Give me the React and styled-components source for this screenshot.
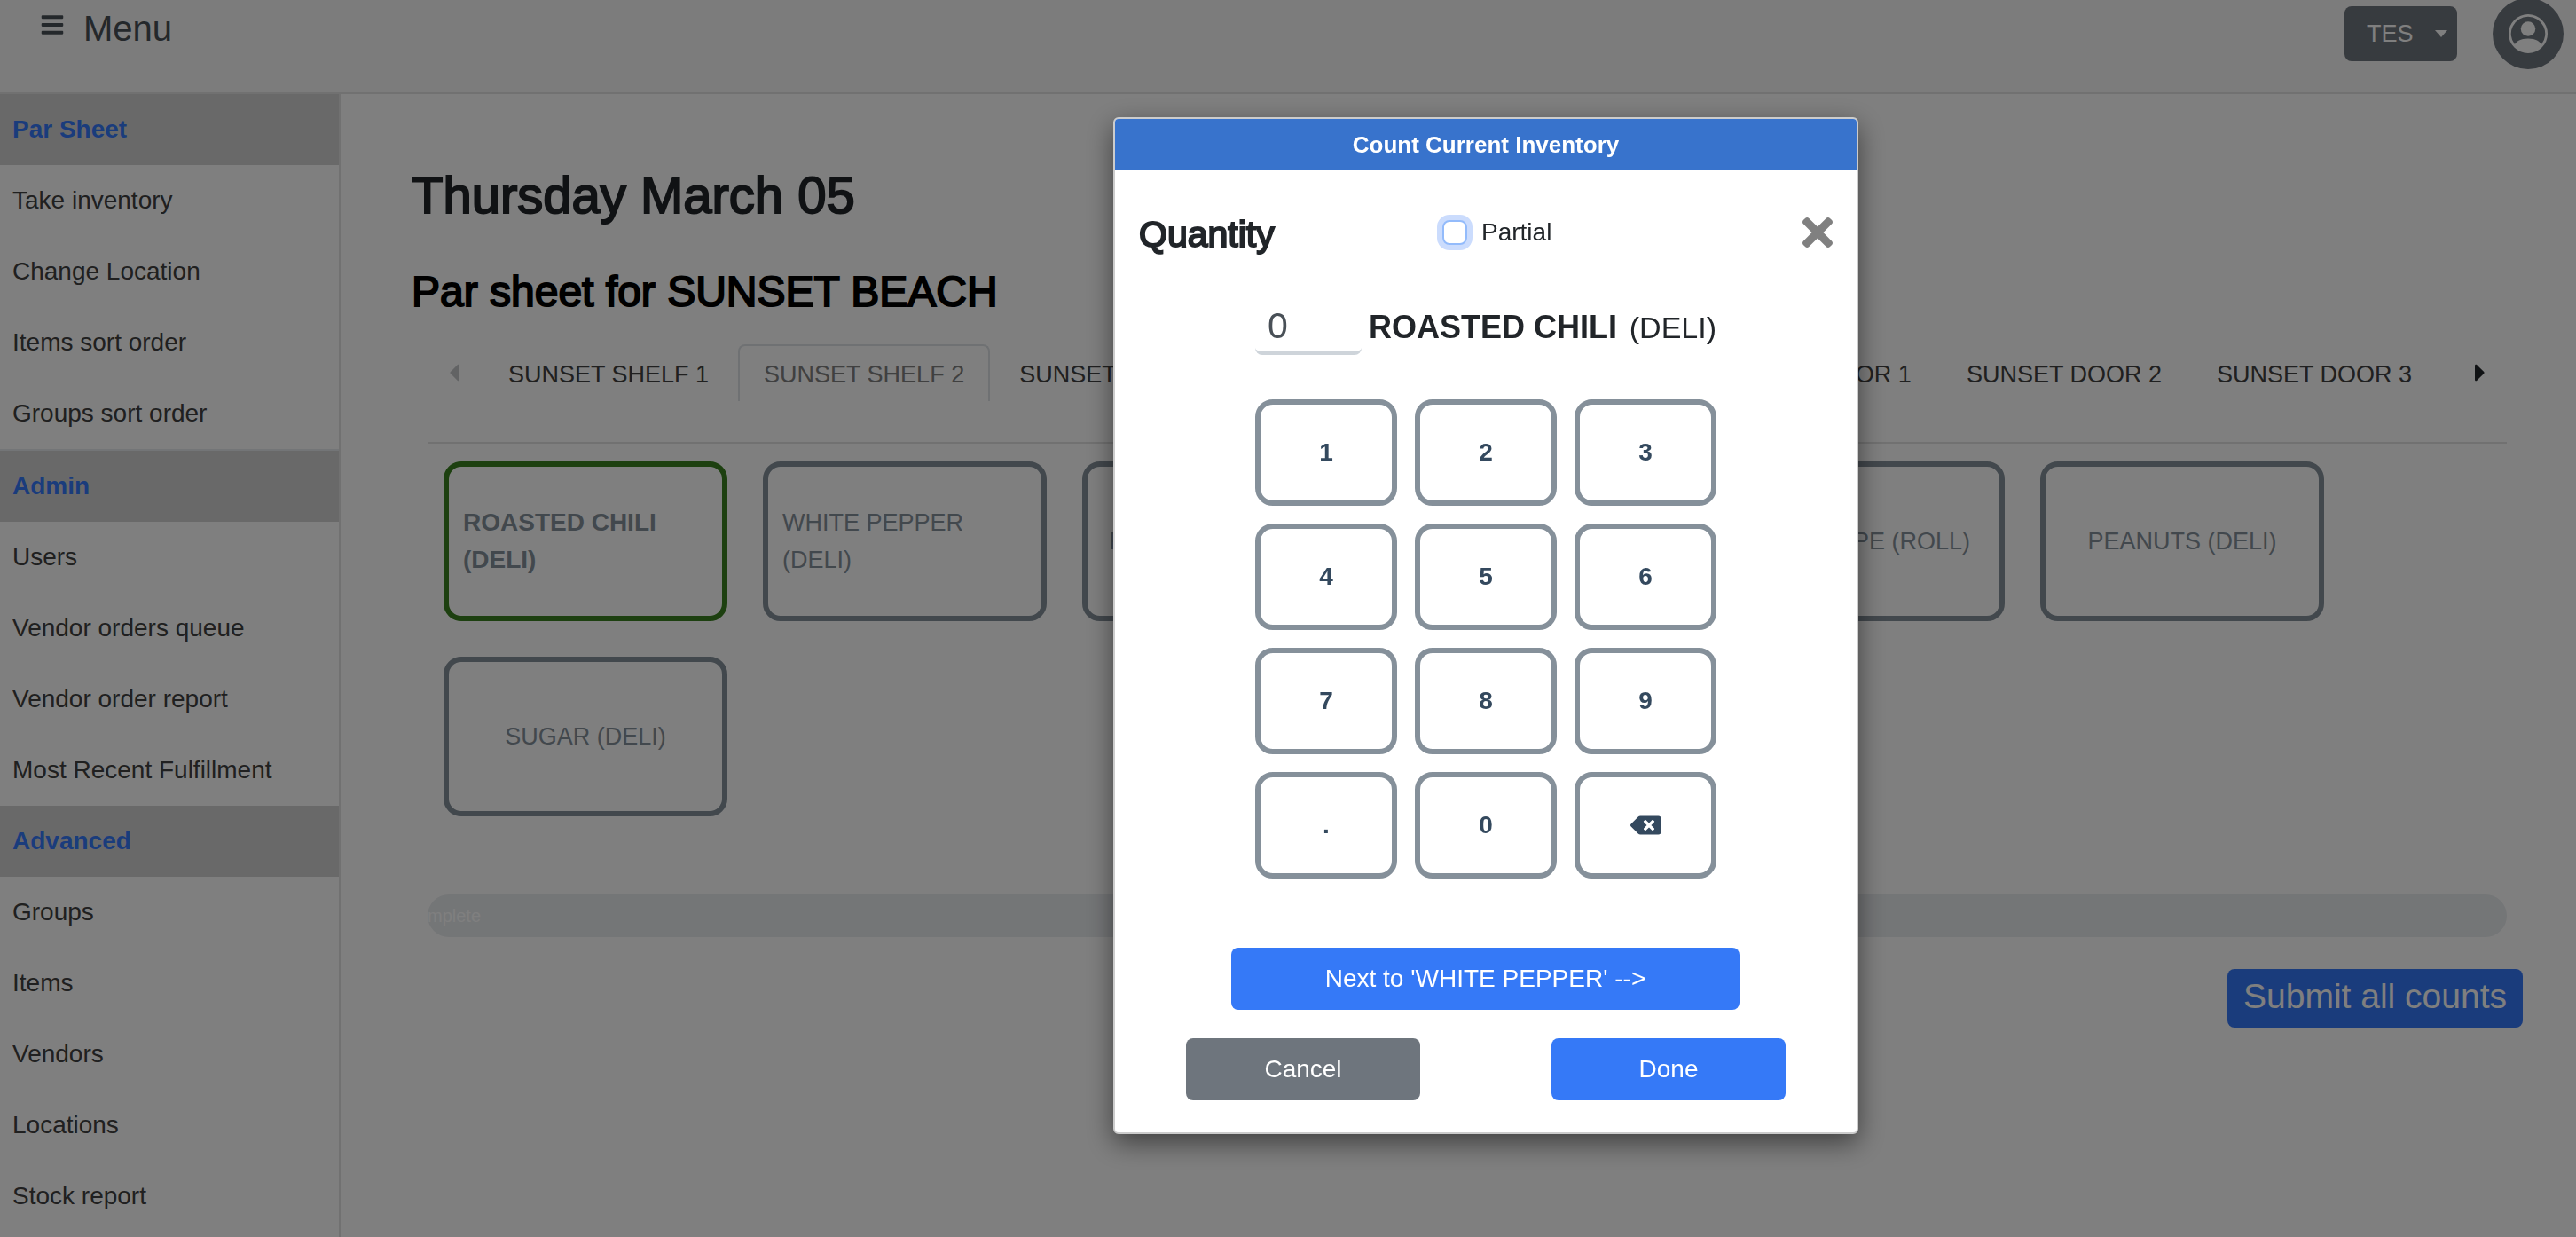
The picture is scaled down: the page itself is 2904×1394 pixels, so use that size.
import React, { useState } from 'react';
import styled, { createGlobalStyle } from 'styled-components';
import { FaBars, FaTimes, FaBackspace, FaCaretLeft, FaCaretRight } from 'react-icons/fa';
import { BsPersonCircle } from 'react-icons/bs';

const GlobalStyle = createGlobalStyle`
  *, *::before, *::after {
    box-sizing: border-box;
  }

  body {
    margin: 0;
    background: #fff;
    color: #212529;
    font-family: 'Liberation Sans', Arial, sans-serif;
    font-size: 28px;
    line-height: 42px;
    overflow: hidden;
  }

  button, input, select {
    font-family: inherit;
    margin: 0;
  }

  button {
    cursor: pointer;
  }
`;

const Page = styled.div`
  display: flex;
  flex-direction: column;
  min-height: 100vh;
`;

const TopBar = styled.header`
  display: flex;
  justify-content: space-between;
  align-items: flex-start;
  height: 106px;
  padding: 0 14px 0 46px;
  background: #f8f8f8;
  border-bottom: 2px solid #e2e2e2;
`;

const MenuButton = styled.button`
  display: flex;
  align-items: center;
  gap: 22px;
  height: 64px;
  padding: 0;
  border: none;
  background: none;
  color: #495057;
  font-size: 40px;

  svg {
    width: 26px;
    height: 28px;
    margin-bottom: 8px;
  }
`;

const Account = styled.div`
  display: flex;
  align-items: center;
  gap: 40px;
  height: 76px;
`;

const SitePicker = styled.div`
  display: grid;
  align-items: center;
  width: 127px;
  height: 62px;
  border-radius: 8px;
  background: #6f767f;

  &::after {
    content: '';
    grid-area: 1 / 1;
    justify-self: end;
    margin-right: 11px;
    border: 7px solid transparent;
    border-top: 8px solid #fff;
    border-bottom: none;
    pointer-events: none;
  }
`;

const SiteSelect = styled.select`
  grid-area: 1 / 1;
  width: 100%;
  height: 62px;
  padding: 0 40px 0 25px;
  appearance: none;
  border: none;
  background: none;
  color: #fff;
  font-size: 27px;
`;

const Avatar = styled.button`
  display: flex;
  align-items: center;
  justify-content: center;
  width: 80px;
  height: 80px;
  padding: 0;
  border: none;
  border-radius: 50%;
  background: #6f767f;
  color: #fff;

  svg {
    width: 44px;
    height: 44px;
  }
`;

const Body = styled.div`
  display: flex;
  flex: 1;
`;

const Sidebar = styled.nav`
  flex: none;
  width: 384px;
  border-right: 2px solid #e2e2e2;
`;

const SideHeading = styled.h3`
  margin: 0;
  padding: 0 14px;
  background: #d3d3d3;
  color: #3578f8;
  font-size: 28px;
  line-height: 80px;
`;

const SideGroup = styled.div`
  border-top: ${(props) => (props.$divided ? '2px solid #e6eaee' : 'none')};
`;

const SideLink = styled.a`
  display: block;
  padding: 0 14px;
  color: #404040;
  line-height: 80px;
  text-decoration: none;
`;

const Content = styled.main`
  flex: 1;
  min-width: 0;
  padding: 80px 60px 0 80px;
`;

const DateTitle = styled.h1`
  margin: 0 0 46px;
  font-size: 58px;
  font-weight: 400;
  line-height: 68px;
  -webkit-text-stroke: 2px currentColor;
`;

const SheetTitle = styled.h2`
  margin: 0 0 30px;
  color: #000;
  font-size: 48px;
  font-weight: 400;
  line-height: 58px;
  -webkit-text-stroke: 2px currentColor;
`;

const Sheet = styled.div`
  padding: 0 18px;
`;

const TabBar = styled.div`
  display: flex;
  align-items: flex-start;
  justify-content: space-between;
  padding: 0 24px 46px;
  border-bottom: 2px solid #e2e2e2;
`;

const TabList = styled.div`
  display: flex;
  flex: 1;
  gap: 4px;
  min-width: 0;
  margin: 0 42px 0 26px;
`;

const Tab = styled.button`
  flex: ${(props) => (props.$grow ? '1 1 0' : 'none')};
  height: 64px;
  padding: 2px 27px 0;
  border: 2px solid ${(props) => (props.$active ? '#dee2e6' : 'transparent')};
  border-bottom: none;
  border-radius: 8px 8px 0 0;
  background: none;
  color: ${(props) => (props.$active ? '#808080' : '#404040')};
  font-size: 27px;
  white-space: nowrap;
`;

const ScrollButton = styled.button`
  display: flex;
  align-items: center;
  height: 64px;
  padding: 0;
  border: none;
  background: none;
  color: ${(props) => (props.disabled ? '#c4c6c8' : '#212529')};

  svg {
    width: 12px;
    height: 32px;
  }
`;

const Cards = styled.div`
  display: flex;
  flex-wrap: wrap;
  gap: 40px;
  padding: 20px 18px 0;
`;

const Card = styled.button`
  display: flex;
  align-items: center;
  justify-content: center;
  width: 320px;
  height: 180px;
  padding: 0 16px;
  border: 6px solid ${(props) => (props.$active ? '#3a8020' : '#85909a')};
  border-radius: 20px;
  background: none;
  color: #85909a;
  font-size: ${(props) => (props.$active ? 28 : 27)}px;
  font-weight: ${(props) => (props.$active ? 700 : 400)};
  line-height: 42px;
  text-align: left;
`;

const Progress = styled.div`
  height: 48px;
  margin-top: 88px;
  border-radius: 24px;
  background: #e9ecef;
  overflow: hidden;
`;

const ProgressFill = styled.div`
  display: flex;
  justify-content: center;
  height: 100%;
  background: #3578f8;
  color: #fff;
  font-size: 20px;
  line-height: 48px;
  white-space: nowrap;
`;

const SubmitRow = styled.div`
  display: flex;
  justify-content: flex-end;
  margin-top: 36px;
`;

const SubmitButton = styled.button`
  height: 66px;
  padding: 0 18px 4px;
  border: none;
  border-radius: 8px;
  background: #3578f8;
  color: #fff;
  font-size: 39px;
`;

const Backdrop = styled.div`
  position: fixed;
  inset: 0;
  display: flex;
  justify-content: center;
  align-items: flex-start;
  padding: 132px 0 0 446px;
  background: rgba(0, 0, 0, 0.5);
`;

const Modal = styled.div`
  width: 840px;
  border: 2px solid #ccc;
  border-radius: 6px;
  background: #fff;
  box-shadow: 0 10px 30px rgba(0, 0, 0, 0.5);
`;

const ModalTitle = styled.h4`
  margin: 0;
  border-radius: 4px 4px 0 0;
  background: #3873cc;
  color: #fff;
  font-size: 26px;
  line-height: 58px;
  text-align: center;
`;

const QuantityRow = styled.div`
  display: grid;
  grid-template-columns: 342px 1fr auto;
  align-items: center;
  padding: 45px 27px 0;
`;

const Quantity = styled.h3`
  margin: 0;
  padding-top: 4px;
  font-size: 41px;
  font-weight: 400;
  line-height: 46px;
  -webkit-text-stroke: 2px currentColor;
`;

const PartialLabel = styled.label`
  display: flex;
  align-items: center;
  gap: 16px;
`;

const Checkbox = styled.input`
  appearance: none;
  width: 28px;
  height: 28px;
  border: 2px solid #93bbfb;
  border-radius: 8px;
  background: #fff;
  box-shadow: 0 0 0 6px #cbdcfd;

  &:checked {
    background: #3578f8;
  }
`;

const CloseButton = styled.button`
  display: flex;
  padding: 0;
  border: none;
  background: none;
  color: #808080;

  svg {
    width: 34px;
    height: 50px;
  }
`;

const Pad = styled.div`
  width: 520px;
  margin: 0 auto;
`;

const ItemRow = styled.div`
  display: flex;
  align-items: center;
  gap: 8px;
  margin: 51px 0 50px;
`;

const CountInput = styled.input`
  width: 120px;
  height: 62px;
  padding: 0 14px;
  border: none;
  border-bottom: 4px solid #ced4da;
  border-radius: 8px;
  background: #fff;
  color: #495057;
  font-size: 41px;
  outline: none;
`;

const ItemName = styled.strong`
  font-size: 36px;
`;

const ItemUnit = styled.span`
  margin-left: auto;
  font-size: 34px;
`;

const Keys = styled.div`
  display: grid;
  grid-template-columns: repeat(3, 1fr);
  gap: 20px;
`;

const Key = styled.button`
  display: flex;
  align-items: center;
  justify-content: center;
  height: 120px;
  padding: 0;
  border: 6px solid #85909a;
  border-radius: 20px;
  background: #fff;
  color: #34495e;
  font-size: 28px;
  font-weight: 700;

  svg {
    width: 35px;
    height: 28px;
  }
`;

const Actions = styled.div`
  display: flex;
  flex-wrap: wrap;
  justify-content: space-between;
  row-gap: 32px;
  width: 676px;
  margin: 78px auto 36px;
`;

const Button = styled.button`
  width: 264px;
  height: 70px;
  border: none;
  border-radius: 8px;
  background: ${(props) => (props.$secondary ? '#6e757d' : '#3579f7')};
  color: #fff;
  font-size: 28px;
`;

const NextButton = styled(Button)`
  width: 573px;
  margin: 0 51px;
`;

const menu = [
  {
    title: 'Par Sheet',
    links: ['Take inventory', 'Change Location', 'Items sort order', 'Groups sort order'],
  },
  {
    title: 'Admin',
    divided: true,
    links: ['Users', 'Vendor orders queue', 'Vendor order report', 'Most Recent Fulfillment'],
  },
  {
    title: 'Advanced',
    links: ['Groups', 'Items', 'Vendors', 'Locations', 'Stock report'],
  },
];

const tabs = [
  { name: 'SUNSET SHELF 1' },
  { name: 'SUNSET SHELF 2' },
  { name: 'SUNSET SHELF 3' },
  { name: 'SUNSET SHELF 4' },
  { name: 'FREEZER', grow: true },
  { name: 'SUNSET DOOR 1' },
  { name: 'SUNSET DOOR 2' },
  { name: 'SUNSET DOOR 3' },
];

const items = [
  'ROASTED CHILI (DELI)',
  'WHITE PEPPER (DELI)',
  'RED PEPPER (DELI)',
  'SALT (DELI)',
  'BLUE TAPE (ROLL)',
  'PEANUTS (DELI)',
  'SUGAR (DELI)',
];

const keys = ['1', '2', '3', '4', '5', '6', '7', '8', '9', '.', '0'];

const CountModal = ({ onClose }) => {
  const [count, setCount] = useState('0');

  const press = (key) => {
    setCount((prev) => (prev === '0' && key !== '.' ? key : prev + key));
  };

  const erase = () => {
    setCount((prev) => prev.slice(0, -1) || '0');
  };

  return (
    <Backdrop>
      <Modal role="dialog" aria-labelledby="count-title">
        <ModalTitle id="count-title">Count Current Inventory</ModalTitle>
        <QuantityRow>
          <Quantity>Quantity</Quantity>
          <PartialLabel htmlFor="partial">
            <Checkbox id="partial" type="checkbox" />
            Partial
          </PartialLabel>
          <CloseButton type="button" aria-label="Close" onClick={onClose}>
            <FaTimes />
          </CloseButton>
        </QuantityRow>
        <Pad>
          <ItemRow>
            <CountInput
              type="text"
              aria-label="Count"
              value={count}
              onChange={(e) => setCount(e.target.value)}
            />
            <ItemName>ROASTED CHILI</ItemName>
            <ItemUnit>(DELI)</ItemUnit>
          </ItemRow>
          <Keys>
            {keys.map((key) => (
              <Key key={key} type="button" onClick={() => press(key)}>{key}</Key>
            ))}
            <Key type="button" aria-label="Backspace" onClick={erase}>
              <FaBackspace />
            </Key>
          </Keys>
        </Pad>
        <Actions>
          <NextButton type="button">Next to 'WHITE PEPPER' --&gt;</NextButton>
          <Button type="button" $secondary onClick={onClose}>Cancel</Button>
          <Button type="button" onClick={onClose}>Done</Button>
        </Actions>
      </Modal>
    </Backdrop>
  );
};

const App = () => {
  const [open, setOpen] = useState(true);
  const [tab, setTab] = useState('SUNSET SHELF 2');
  const progress = 0;

  return (
    <Page>
      <GlobalStyle />
      <TopBar>
        <MenuButton type="button">
          <FaBars />
          Menu
        </MenuButton>
        <Account>
          <SitePicker>
            <SiteSelect aria-label="Site" defaultValue="TES">
              <option>TES</option>
            </SiteSelect>
          </SitePicker>
          <Avatar type="button" aria-label="Account">
            <BsPersonCircle />
          </Avatar>
        </Account>
      </TopBar>
      <Body>
        <Sidebar>
          {menu.map((group) => (
            <SideGroup key={group.title} $divided={group.divided}>
              <SideHeading>{group.title}</SideHeading>
              {group.links.map((link) => (
                <SideLink key={link} href="#">{link}</SideLink>
              ))}
            </SideGroup>
          ))}
        </Sidebar>
        <Content>
          <DateTitle>Thursday March 05</DateTitle>
          <SheetTitle>Par sheet for SUNSET BEACH</SheetTitle>
          <Sheet>
            <TabBar>
              <ScrollButton type="button" aria-label="Previous" disabled>
                <FaCaretLeft />
              </ScrollButton>
              <TabList>
                {tabs.map((t) => (
                  <Tab
                    key={t.name}
                    type="button"
                    $active={t.name === tab}
                    $grow={t.grow}
                    onClick={() => setTab(t.name)}
                  >
                    {t.name}
                  </Tab>
                ))}
              </TabList>
              <ScrollButton type="button" aria-label="Next">
                <FaCaretRight />
              </ScrollButton>
            </TabBar>
            <Cards>
              {items.map((item, i) => (
                <Card key={item} type="button" $active={i === 0} onClick={() => setOpen(true)}>
                  {item}
                </Card>
              ))}
            </Cards>
            <Progress role="progressbar" aria-valuenow={progress}>
              <ProgressFill style={{ width: `${progress}%` }}>{progress}% Complete</ProgressFill>
            </Progress>
          </Sheet>
          <SubmitRow>
            <SubmitButton type="button">Submit all counts</SubmitButton>
          </SubmitRow>
        </Content>
      </Body>
      {open && <CountModal onClose={() => setOpen(false)} />}
    </Page>
  );
};

export default App;
